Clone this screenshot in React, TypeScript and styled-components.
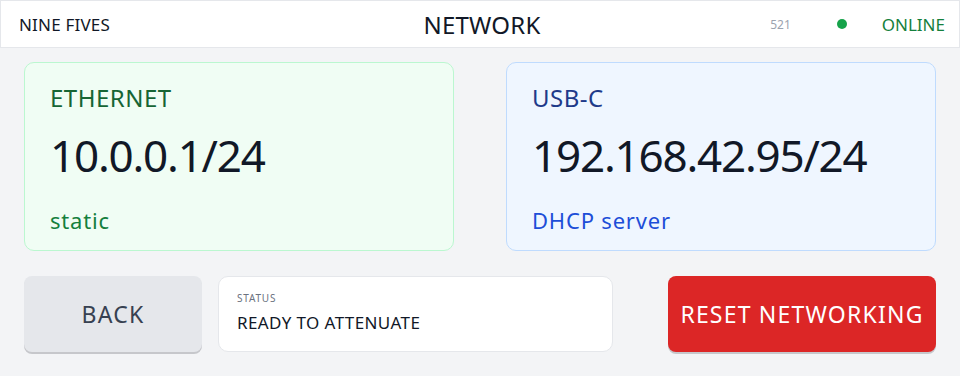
import styled, { createGlobalStyle } from "styled-components";

const GlobalStyle = createGlobalStyle`
  html, body {
    margin: 0;
    padding: 0;
    background: #f3f4f6;
    font-family: "Noto Sans", "Open Sans", sans-serif;
  }
  * { box-sizing: border-box; }
`;

const Screen = styled.div`
  width: 960px;
  height: 376px;
  display: flex;
  flex-direction: column;
  background: #f3f4f6;
`;

const TopBar = styled.header`
  height: 48px;
  background: #ffffff;
  border: 1px solid #e5e7eb;
  display: grid;
  grid-template-columns: 1fr auto 1fr;
  align-items: center;
  padding: 0 14px 0 18px;
`;

const Brand = styled.div`
  font-size: 17px;
  letter-spacing: 0.2px;
  color: #111827;
`;

const Title = styled.h1`
  margin: 0;
  font-size: 24px;
  font-weight: 400;
  letter-spacing: 0.2px;
  color: #111827;
`;

const StatusArea = styled.div`
  display: flex;
  align-items: center;
  justify-content: flex-end;
`;

const Counter = styled.span`
  font-size: 12px;
  color: #9ca3af;
  margin-right: 46px;
`;

const Dot = styled.span`
  width: 10px;
  height: 10px;
  border-radius: 50%;
  background: #16a34a;
  margin-right: 35px;
`;

const Online = styled.span`
  font-size: 17px;
  color: #15803d;
`;

const Cards = styled.div`
  display: flex;
  gap: 52px;
  padding: 14px 24px 0;
`;

type Tone = "green" | "blue";

const tones = {
  green: { bg: "#f0fdf4", border: "#bbf7d0", label: "#166534", mode: "#15803d" },
  blue: { bg: "#eff6ff", border: "#bfdbfe", label: "#1e3a8a", mode: "#1d4ed8" },
};

const Card = styled.section<{ tone: Tone }>`
  width: 430px;
  height: 189px;
  background: ${(p) => tones[p.tone].bg};
  border: 1px solid ${(p) => tones[p.tone].border};
  border-radius: 10px;
  padding: 21px 25px 0;
  display: flex;
  flex-direction: column;
`;

const CardLabel = styled.div<{ tone: Tone }>`
  font-size: 24px;
  line-height: 28px;
  letter-spacing: 0.5px;
  color: ${(p) => tones[p.tone].label};
`;

const Address = styled.div`
  margin-top: 18px;
  font-size: 44px;
  line-height: 50px;
  letter-spacing: -1.2px;
  color: #111827;
`;

const Mode = styled.div<{ tone: Tone }>`
  margin-top: 26px;
  font-size: 22px;
  line-height: 28px;
  letter-spacing: 0.8px;
  color: ${(p) => tones[p.tone].mode};
`;

const Actions = styled.div`
  display: flex;
  align-items: flex-start;
  padding: 25px 24px 0;
`;

const Button = styled.button<{ danger?: boolean }>`
  height: 76px;
  border: none;
  border-radius: 8px;
  font-family: inherit;
  font-size: 23px;
  letter-spacing: 1.2px;
  cursor: pointer;
  background: ${(p) => (p.danger ? "#dc2626" : "#e5e7eb")};
  color: ${(p) => (p.danger ? "#ffffff" : "#374151")};
  box-shadow: 0 2px 0 #c6c7cb;
`;

const BackButton = styled(Button)`
  width: 178px;
`;

const ResetButton = styled(Button)`
  width: 268px;
  margin-left: auto;
`;

const StatusBox = styled.div`
  width: 395px;
  height: 76px;
  margin-left: 16px;
  background: #ffffff;
  border: 1px solid #e5e7eb;
  border-radius: 10px;
  padding: 14px 18px 0;
`;

const StatusLabel = styled.div`
  font-size: 10px;
  line-height: 14px;
  letter-spacing: 0.8px;
  color: #6b7280;
`;

const StatusText = styled.div`
  margin-top: 8px;
  font-size: 17px;
  line-height: 20px;
  letter-spacing: 0.4px;
  color: #111827;
`;

export default function App() {
  return (
    <>
      <GlobalStyle />
      <Screen>
        <TopBar>
          <Brand>NINE FIVES</Brand>
          <Title>NETWORK</Title>
          <StatusArea>
            <Counter>521</Counter>
            <Dot />
            <Online>ONLINE</Online>
          </StatusArea>
        </TopBar>
        <Cards>
          <Card tone="green">
            <CardLabel tone="green">ETHERNET</CardLabel>
            <Address>10.0.0.1/24</Address>
            <Mode tone="green">static</Mode>
          </Card>
          <Card tone="blue">
            <CardLabel tone="blue">USB-C</CardLabel>
            <Address>192.168.42.95/24</Address>
            <Mode tone="blue">DHCP server</Mode>
          </Card>
        </Cards>
        <Actions>
          <BackButton>BACK</BackButton>
          <StatusBox>
            <StatusLabel>STATUS</StatusLabel>
            <StatusText>READY TO ATTENUATE</StatusText>
          </StatusBox>
          <ResetButton danger>RESET NETWORKING</ResetButton>
        </Actions>
      </Screen>
    </>
  );
}
